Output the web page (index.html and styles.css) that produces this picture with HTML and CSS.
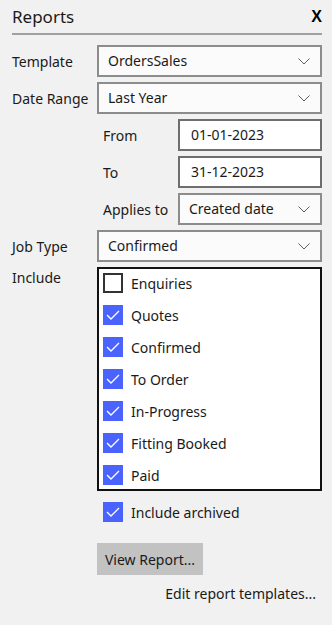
FILE: index.html
```html
<!DOCTYPE html>
<html lang="en">
<head>
    <meta charset="UTF-8">
    <meta name="viewport" content="width=device-width, initial-scale=1.0">
    <title>Reports</title>
    <link rel="stylesheet" href="styles.css">
</head>
<body>
    <div class="reports-panel">
        <div class="panel-header">
            <h1>Reports</h1>
            <span class="close-btn">X</span>
        </div>

        <div class="form-row">
            <label>Template</label>
            <div class="select-box"><span>OrdersSales</span><svg class="chevron" viewBox="0 0 12 7"><polyline points="0.5,0.5 6,6 11.5,0.5"/></svg></div>
        </div>
        <div class="form-row">
            <label>Date Range</label>
            <div class="select-box"><span>Last Year</span><svg class="chevron" viewBox="0 0 12 7"><polyline points="0.5,0.5 6,6 11.5,0.5"/></svg></div>
        </div>
        <div class="form-row sub-row">
            <label>From</label>
            <div class="text-box">01-01-2023</div>
        </div>
        <div class="form-row sub-row">
            <label>To</label>
            <div class="text-box">31-12-2023</div>
        </div>
        <div class="form-row sub-row">
            <label>Applies to</label>
            <div class="select-box"><span>Created date</span><svg class="chevron" viewBox="0 0 12 7"><polyline points="0.5,0.5 6,6 11.5,0.5"/></svg></div>
        </div>
        <div class="form-row">
            <label>Job Type</label>
            <div class="select-box"><span>Confirmed</span><svg class="chevron" viewBox="0 0 12 7"><polyline points="0.5,0.5 6,6 11.5,0.5"/></svg></div>
        </div>

        <div class="form-row include-row">
            <label>Include</label>
            <div class="check-list">
                <div class="check-item"><span class="check"></span>Enquiries</div>
                <div class="check-item"><span class="check checked"><svg viewBox="0 0 20 20"><polyline points="4,10 8,14 16,6"/></svg></span>Quotes</div>
                <div class="check-item"><span class="check checked"><svg viewBox="0 0 20 20"><polyline points="4,10 8,14 16,6"/></svg></span>Confirmed</div>
                <div class="check-item"><span class="check checked"><svg viewBox="0 0 20 20"><polyline points="4,10 8,14 16,6"/></svg></span>To Order</div>
                <div class="check-item"><span class="check checked"><svg viewBox="0 0 20 20"><polyline points="4,10 8,14 16,6"/></svg></span>In-Progress</div>
                <div class="check-item"><span class="check checked"><svg viewBox="0 0 20 20"><polyline points="4,10 8,14 16,6"/></svg></span>Fitting Booked</div>
                <div class="check-item"><span class="check checked"><svg viewBox="0 0 20 20"><polyline points="4,10 8,14 16,6"/></svg></span>Paid</div>
            </div>
        </div>

        <div class="archived">
            <div class="check-item"><span class="check checked"><svg viewBox="0 0 20 20"><polyline points="4,10 8,14 16,6"/></svg></span>Include archived</div>
        </div>

        <div class="actions">
            <button class="view-btn">View Report...</button>
        </div>
        <div class="edit-link">Edit report templates...</div>
    </div>
</body>
</html>
```

FILE: styles.css
```css
/* Reset */
* {
    margin: 0;
    padding: 0;
    box-sizing: border-box;
}

body {
    font-family: "Noto Sans", "Open Sans", sans-serif;
    font-size: 14px;
    color: #1a1a1a;
    background-color: #f1f1f1;
}

/* Panel */
.reports-panel {
    padding: 0 10px 0 12px;
}

.panel-header {
    display: flex;
    justify-content: space-between;
    align-items: center;
    height: 35px;
    border-bottom: 2px solid #a0a0a0;
    margin-bottom: 10px;
}

.panel-header h1 {
    font-size: 17px;
    font-weight: normal;
}

.close-btn {
    font-family: "Liberation Sans", Arial, sans-serif;
    font-weight: bold;
    font-size: 16px;
    color: #000;
}

/* Rows */
.form-row {
    display: grid;
    grid-template-columns: 85px 1fr;
    align-items: center;
    height: 32px;
    margin-bottom: 5px;
}

.form-row.sub-row {
    padding-left: 91px;
    grid-template-columns: 75px 1fr;
}

.select-box {
    display: flex;
    align-items: center;
    justify-content: space-between;
    height: 32px;
    padding: 0 10px 0 9px;
    background-color: #fbfbfb;
    border: 2px solid #8c8c8c;
}

.select-box span {
    margin-top: -2px;
}

.chevron {
    width: 12px;
    height: 7px;
    fill: none;
    stroke: #5f5f5f;
    stroke-width: 1;
}

.text-box {
    height: 32px;
    line-height: 27px;
    padding-left: 11px;
    background-color: #ffffff;
    border: 2px solid #6e6e6e;
}

/* Include list */
.include-row {
    height: auto;
    align-items: start;
}

.include-row label {
    margin-top: 1px;
}

.check-list {
    display: flex;
    flex-direction: column;
    gap: 12px;
    padding: 4px 0 4px 4px;
    height: 224px;
    background-color: #ffffff;
    border: 2px solid #111111;
}

.check-item {
    display: flex;
    align-items: center;
    gap: 8px;
    height: 20px;
}

.check {
    width: 20px;
    height: 20px;
    border: 2px solid #333333;
    background-color: #ffffff;
    flex-shrink: 0;
}

.check.checked {
    border: none;
    background-color: #4a63ff;
}

.check svg {
    display: block;
    width: 20px;
    height: 20px;
    fill: none;
    stroke: #ffffff;
    stroke-width: 1.3;
}

.archived {
    padding-left: 91px;
    margin-top: 11px;
}

.actions {
    padding-left: 85px;
    margin-top: 21px;
}

.view-btn {
    font-family: inherit;
    font-size: 14px;
    color: #1a1a1a;
    width: 106px;
    height: 32px;
    border: none;
    background-color: #c2c2c2;
}

.edit-link {
    text-align: right;
    padding-right: 6px;
    margin-top: 9px;
}
```
